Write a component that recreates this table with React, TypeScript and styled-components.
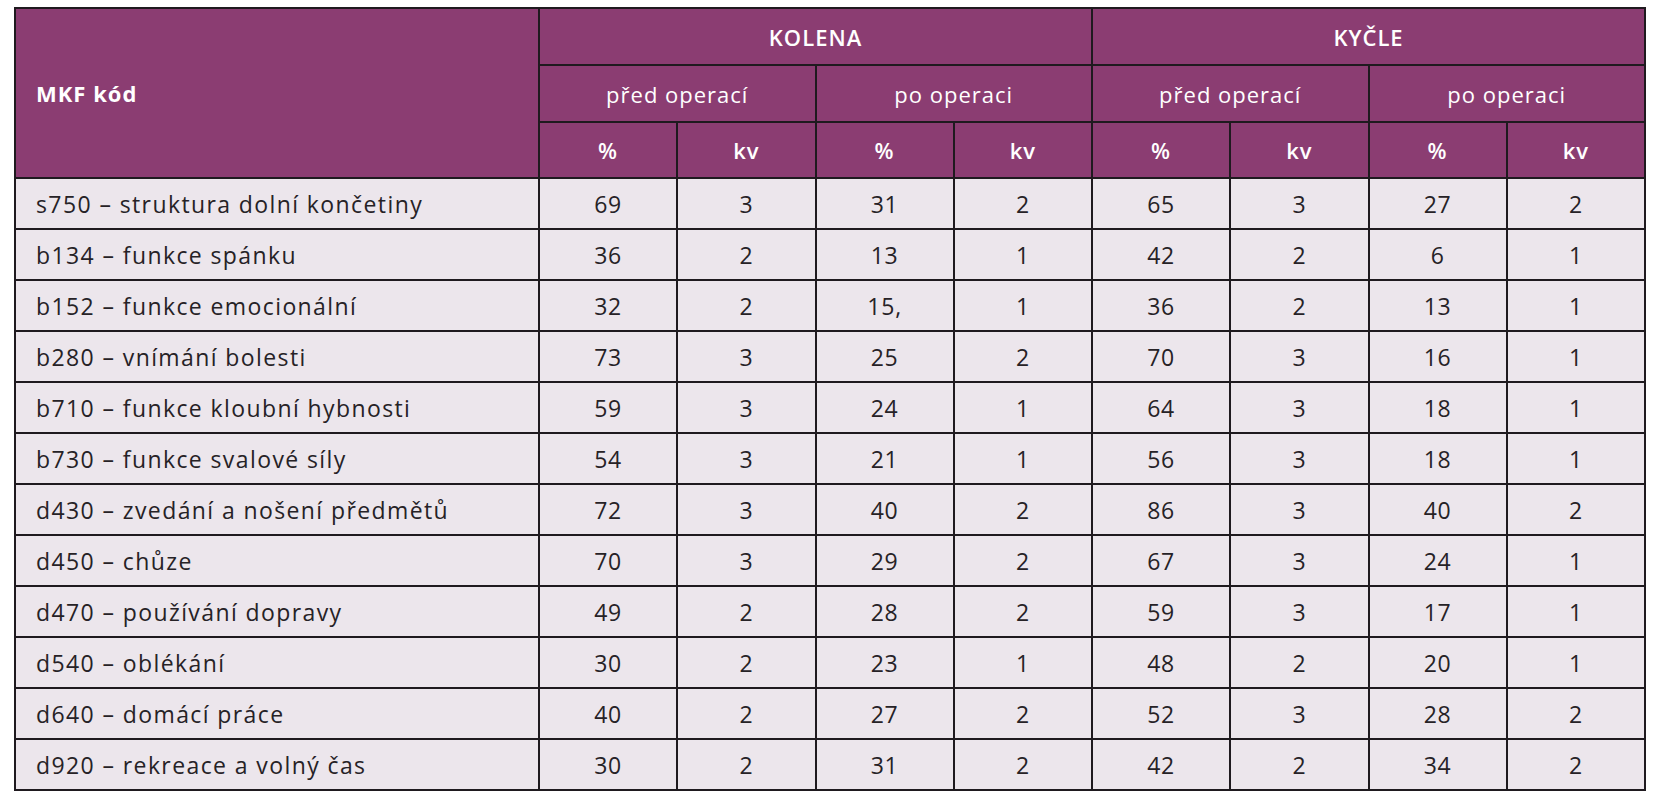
import styled, { createGlobalStyle } from "styled-components";

const GlobalStyle = createGlobalStyle`
  html, body {
    margin: 0;
    padding: 0;
    background: #ffffff;
  }
`;

const Page = styled.div`
  padding: 7px 20px 0 14px;
  font-family: "Open Sans", "DejaVu Sans", sans-serif;
`;

const Table = styled.table`
  width: 1632px;
  border-collapse: collapse;
  table-layout: fixed;
  border: 2px solid #1f1a1f;
`;

const HeadRow = styled.tr<{ h: number }>`
  height: ${(p) => p.h}px;
`;

const HeadCell = styled.th<{ weight?: number; left?: boolean }>`
  background: #8b3d72;
  color: #ffffff;
  border: 2px solid #1f1a1f;
  font-size: 22px;
  font-weight: ${(p) => p.weight ?? 400};
  letter-spacing: 1px;
  text-align: ${(p) => (p.left ? "left" : "center")};
  padding: 0 0 0 ${(p) => (p.left ? "20px" : "0")};
  vertical-align: middle;
`;

const BodyRow = styled.tr`
  height: 51px;
  background: #ece6ec;
`;

const BodyCell = styled.td<{ label?: boolean }>`
  border: 2px solid #1f1a1f;
  color: #262226;
  font-size: 23px;
  font-weight: 400;
  letter-spacing: ${(p) => (p.label ? "1.4px" : "0.8px")};
  text-align: ${(p) => (p.label ? "left" : "center")};
  padding: 0 0 0 ${(p) => (p.label ? "20px" : "0")};
  vertical-align: middle;
  white-space: nowrap;
`;

type Row = [string, ...string[]];

const rows: Row[] = [
  ["s750 – struktura dolní končetiny", "69", "3", "31", "2", "65", "3", "27", "2"],
  ["b134 – funkce spánku", "36", "2", "13", "1", "42", "2", "6", "1"],
  ["b152 – funkce emocionální", "32", "2", "15,", "1", "36", "2", "13", "1"],
  ["b280 – vnímání bolesti", "73", "3", "25", "2", "70", "3", "16", "1"],
  ["b710 – funkce kloubní hybnosti", "59", "3", "24", "1", "64", "3", "18", "1"],
  ["b730 – funkce svalové síly", "54", "3", "21", "1", "56", "3", "18", "1"],
  ["d430 – zvedání a nošení předmětů", "72", "3", "40", "2", "86", "3", "40", "2"],
  ["d450 – chůze", "70", "3", "29", "2", "67", "3", "24", "1"],
  ["d470 – používání dopravy", "49", "2", "28", "2", "59", "3", "17", "1"],
  ["d540 – oblékání", "30", "2", "23", "1", "48", "2", "20", "1"],
  ["d640 – domácí práce", "40", "2", "27", "2", "52", "3", "28", "2"],
  ["d920 – rekreace a volný čas", "30", "2", "31", "2", "42", "2", "34", "2"],
];

const App = () => {
  return (
    <Page>
      <GlobalStyle />
      <Table>
        <colgroup>
          <col style={{ width: 524 }} />
          {Array.from({ length: 8 }).map((_, i) => (
            <col key={i} />
          ))}
        </colgroup>
        <thead>
          <HeadRow h={57}>
            <HeadCell rowSpan={3} weight={700} left>
              MKF kód
            </HeadCell>
            <HeadCell colSpan={4} weight={600}>
              KOLENA
            </HeadCell>
            <HeadCell colSpan={4} weight={600}>
              KYČLE
            </HeadCell>
          </HeadRow>
          <HeadRow h={57}>
            <HeadCell colSpan={2}>před operací</HeadCell>
            <HeadCell colSpan={2}>po operaci</HeadCell>
            <HeadCell colSpan={2}>před operací</HeadCell>
            <HeadCell colSpan={2}>po operaci</HeadCell>
          </HeadRow>
          <HeadRow h={56}>
            <HeadCell weight={600}>%</HeadCell>
            <HeadCell weight={600}>kv</HeadCell>
            <HeadCell weight={600}>%</HeadCell>
            <HeadCell weight={600}>kv</HeadCell>
            <HeadCell weight={600}>%</HeadCell>
            <HeadCell weight={600}>kv</HeadCell>
            <HeadCell weight={600}>%</HeadCell>
            <HeadCell weight={600}>kv</HeadCell>
          </HeadRow>
        </thead>
        <tbody>
          {rows.map(([label, ...values]) => (
            <BodyRow key={label}>
              <BodyCell label>{label}</BodyCell>
              {values.map((v, i) => (
                <BodyCell key={i}>{v}</BodyCell>
              ))}
            </BodyRow>
          ))}
        </tbody>
      </Table>
    </Page>
  );
};

export default App;
